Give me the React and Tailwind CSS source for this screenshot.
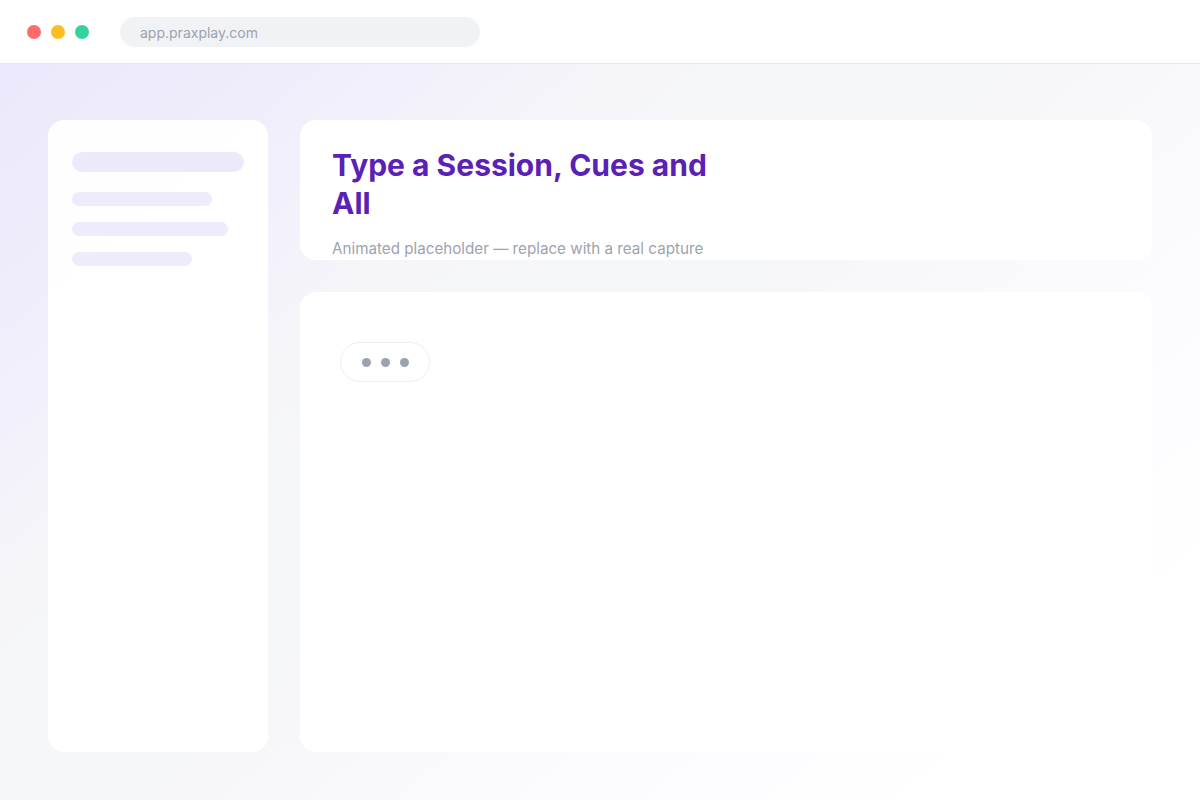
const skeletonBars = ["w-[140px]", "w-[156px]", "w-[120px]"];

function TrafficLights() {
  return (
    <div className="flex items-center gap-[10px]">
      <span className="h-[14px] w-[14px] rounded-full bg-[#ff6b6b]" />
      <span className="h-[14px] w-[14px] rounded-full bg-[#fbbf24]" />
      <span className="h-[14px] w-[14px] rounded-full bg-[#34d399]" />
    </div>
  );
}

function TypingBubble() {
  return (
    <div className="flex h-10 w-[90px] items-center justify-center gap-[10px] rounded-full border border-[#eceef2] bg-white">
      <span className="h-[9px] w-[9px] rounded-full bg-[#9ca3af]" />
      <span className="h-[9px] w-[9px] rounded-full bg-[#9ca3af]" />
      <span className="h-[9px] w-[9px] rounded-full bg-[#9ca3af]" />
    </div>
  );
}

export default function App() {
  return (
    <div className="flex h-[800px] w-[1200px] flex-col overflow-hidden bg-[#f7f7f9] font-['Inter',sans-serif]">
      <header className="flex h-16 shrink-0 items-center gap-[31px] border-b border-[#e8e9ed] bg-white pl-[27px]">
        <TrafficLights />
        <div className="flex h-[30px] w-[360px] items-center rounded-full bg-[#f1f2f5] px-5 pt-px text-[14px] text-[#9ca3af]">
          app.praxplay.com
        </div>
      </header>

      <main className="flex flex-1 gap-8 bg-[linear-gradient(140deg,#ebe8fc_0%,#efedfb_14%,#f4f3fa_26%,#f6f7f9_36%,#f7f7f9_52%,#faf9fd_62%,#fcfbff_72%,#ffffff_86%)] px-12 pb-12 pt-14">
        <aside className="flex w-[220px] shrink-0 flex-col rounded-2xl bg-white/95 px-6 pt-8">
          <div className="h-5 w-[172px] rounded-full bg-[#ece9fb]" />
          <div className="mt-5 flex flex-col gap-4">
            {skeletonBars.map((w) => (
              <div key={w} className={`h-[14px] rounded-full bg-[#eeebfb] ${w}`} />
            ))}
          </div>
        </aside>

        <section className="flex min-w-0 flex-1 flex-col gap-8">
          <div className="h-[140px] rounded-2xl bg-white/95 px-8 pt-[26px]">
            <h1 className="max-w-[400px] text-[30px] font-bold leading-[38px] text-[#5b21b6]">
              Type a Session, Cues and All
            </h1>
            <p className="mt-[16px] text-[15.2px] leading-[22px] text-[#9ca3af]">
              Animated placeholder — replace with a real capture
            </p>
          </div>

          <div className="flex-1 rounded-2xl bg-white/95 px-10 pt-[50px]">
            <TypingBubble />
          </div>
        </section>
      </main>
    </div>
  );
}
